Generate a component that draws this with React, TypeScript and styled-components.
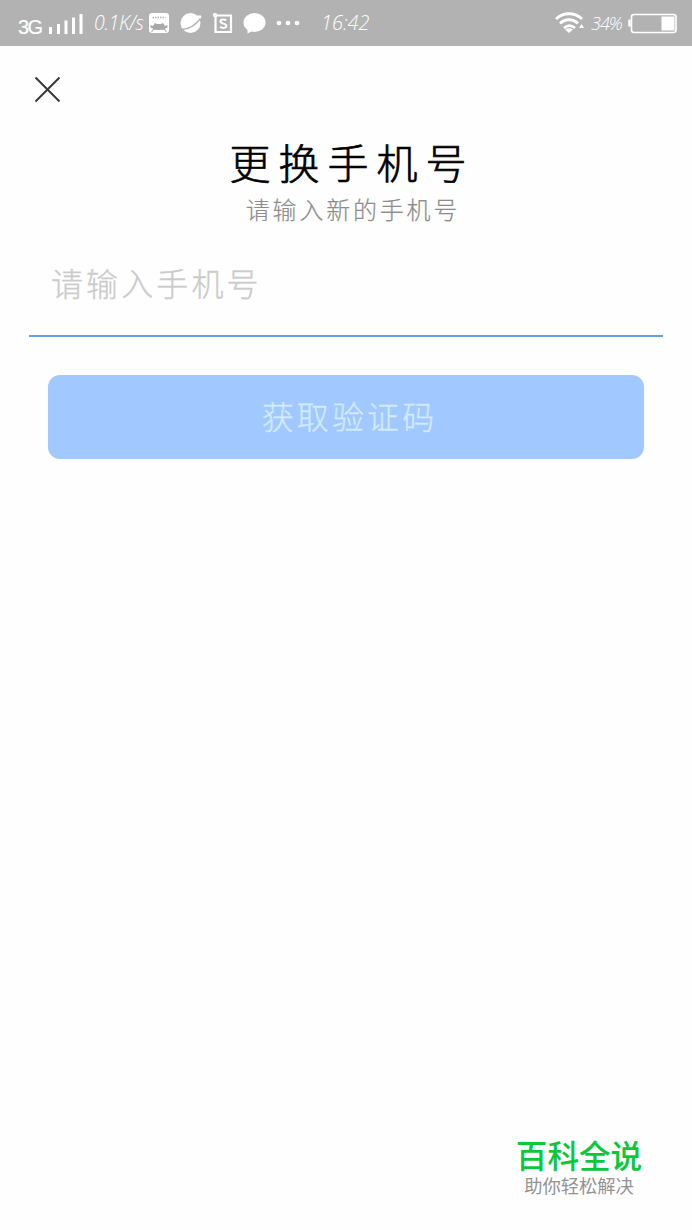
import React from "react";
import styled, { createGlobalStyle } from "styled-components";

const GlobalStyle = createGlobalStyle`
  * { box-sizing: border-box; }
  html, body { margin: 0; padding: 0; background: #fefefe; }
  body { font-family: "Noto Sans CJK SC", sans-serif; }
`;

const Screen = styled.div`
  display: flex;
  flex-direction: column;
  width: 692px;
  height: 1230px;
  overflow: hidden;
  background: #fefefe;
`;

const StatusBar = styled.header`
  display: flex;
  align-items: center;
  flex: none;
  height: 46px;
  padding: 0 14px 0 18px;
  background: #b2b2b2;
  color: #fff;
`;

const Network = styled.span`
  width: 30px;
  padding-top: 7px;
  font: 20px/24px "Liberation Sans", sans-serif;
  letter-spacing: -1.6px;
  -webkit-text-stroke: 0.2px #fff;
`;

const StatusText = styled.span<{ $width: number; $size: number; $gap?: number; $spacing?: number }>`
  flex: none;
  width: ${(p) => p.$width}px;
  margin-left: ${(p) => p.$gap ?? 0}px;
  font: italic 300 ${(p) => p.$size}px/24px "Open Sans", "Noto Sans", sans-serif;
  letter-spacing: ${(p) => p.$spacing ?? 0}px;
  white-space: nowrap;
`;

const Icon = styled.svg<{ $gap?: number }>`
  display: block;
  flex: none;
  margin-left: ${(p) => p.$gap ?? 0}px;
`;

const Spacer = styled.div`
  flex: 1;
`;

const CloseButton = styled.button`
  display: block;
  width: 28px;
  height: 28px;
  margin: 29px 0 0 34px;
  padding: 0;
  border: 0;
  background: none;
`;

const Heading = styled.div`
  display: flex;
  flex-direction: column;
  align-items: center;
  margin-top: 31px;
`;

const Title = styled.h1`
  margin: 0;
  padding-left: 12px;
  font-size: 41px;
  font-weight: 300;
  line-height: 54px;
  letter-spacing: 8px;
  color: #000;
  -webkit-text-stroke: 0.7px #000;
`;

const Subtitle = styled.p`
  margin: 2px 0 0;
  padding-left: 14px;
  font-size: 24px;
  font-weight: 300;
  line-height: 38px;
  letter-spacing: 2.8px;
  color: #8c8c8c;
  -webkit-text-stroke: 0.2px #8c8c8c;
`;

const Form = styled.form`
  display: flex;
  flex-direction: column;
  margin-top: 25px;
  padding: 0 29px;
`;

const PhoneInput = styled.input`
  width: 634px;
  height: 84px;
  padding: 0 22px 24px;
  border: 0;
  border-bottom: 2px solid #6b9fda;
  outline: 0;
  background: transparent;
  font: 300 32px/44px "Noto Sans CJK SC", sans-serif;
  letter-spacing: 3.1px;
  &::placeholder {
    color: #cbcbcb;
    opacity: 1;
    -webkit-text-stroke: 0.3px #cbcbcb;
  }
`;

const SubmitButton = styled.button`
  width: 596px;
  height: 84px;
  margin: 38px 0 0 19px;
  padding: 0 0 5px 7px;
  border: 0;
  border-radius: 12px;
  background: #a1c9ff;
  color: #d3eafe;
  font: 300 32px/44px "Noto Sans CJK SC", sans-serif;
  letter-spacing: 3.1px;
  -webkit-text-stroke: 0.3px #d3eafe;
`;

const Brand = styled.footer`
  display: flex;
  flex-direction: column;
  align-items: center;
  align-self: flex-end;
  width: 130px;
  margin: auto 48px 33px 0;
`;

const BrandName = styled.strong`
  font-size: 31.6px;
  font-weight: 500;
  line-height: 37px;
  color: #09c83c;
  white-space: nowrap;
`;

const BrandSlogan = styled.span`
  font-size: 18.3px;
  line-height: 24px;
  font-weight: 400;
  color: #929292;
  white-space: nowrap;
`;

export default function App() {
  return (
    <Screen>
      <GlobalStyle />
      <StatusBar>
        <Network>3G</Network>
        <Icon width="36" height="24" viewBox="0 0 36 24" fill="#fff">
          <rect x="1" y="16" width="3" height="7" />
          <rect x="9" y="13" width="3" height="10" />
          <rect x="16.500" y="9.500" width="3" height="13.500" />
          <rect x="24" y="6.500" width="3" height="16.500" />
          <rect x="31.500" y="3" width="3" height="20" />
        </Icon>
        <StatusText $width={54} $size={19.5} $gap={10} $spacing={-0.3}>0.1K/s</StatusText>
        <Icon width="22" height="22" viewBox="0 0 22 22">
          <rect x="1" y="1" width="20" height="20" rx="3" fill="#fff" />
          <path d="M4.500 5.500h13" stroke="#b2b2b2" strokeWidth="1.400" strokeDasharray="1.500 1" />
          <path d="M2.500 15.500V13L5 14l2-3 2 1h4l2-1 2 3 2.500-1v2.500l-3 1.500H5.500Z" fill="#a8a8a8" />
          <path d="m3.500 20 2-2.500h11l2 2.500" fill="none" stroke="#b2b2b2" strokeWidth="1.200" />
        </Icon>
        <Icon $gap={10} width="22" height="22" viewBox="0 0 22 22">
          <circle cx="10.500" cy="11" r="10" fill="#fff" />
          <path d="M17 3.500 21 3.500Q22 6 19.500 8" fill="#fff" />
          <path d="M2 17.500C9 17 16 12.500 20.500 6.500" fill="none" stroke="#b2b2b2" strokeWidth="1.300" />
        </Icon>
        <Icon $gap={10} width="22" height="22" viewBox="0 0 22 22">
          <path d="M3.500 3.500h15.500v16.500H3.500Z" fill="none" stroke="#fff" strokeWidth="2.200" />
          <circle cx="3" cy="3" r="2.200" fill="#fff" />
          <path d="M14.200 8.500C12.800 7 8.500 7 8.500 9.500c0 2.800 5.900 1.500 5.900 4.300 0 2.600-4.600 2.600-6.200 1" fill="none" stroke="#fff" strokeWidth="2" />
        </Icon>
        <Icon $gap={8} width="24" height="22" viewBox="0 0 24 22" fill="#fff">
          <ellipse cx="12.500" cy="10.500" rx="11" ry="9.500" />
          <path d="m5.500 15 0 6.500 6-3Z" />
        </Icon>
        <Icon $gap={8} width="28" height="8" viewBox="0 0 28 8" fill="#fff">
          <circle cx="5" cy="4" r="2.300" />
          <circle cx="14" cy="4" r="2.300" />
          <circle cx="23" cy="4" r="2.300" />
        </Icon>
        <StatusText $width={54} $size={20} $gap={19}>16:42</StatusText>
        <Spacer />
        <Icon width="31" height="24" viewBox="0 0 31 24" fill="none" stroke="#fff">
          <path d="M1 8C8 1 20 1 27 8M5 12.500c5-5 13-5 18 0M9 17c3.500-3 7.500-3 11 0" strokeWidth="2.800" />
          <path d="m10 18.500 4 3.500 4-3.500q-4-2.500-8 0Z" fill="#fff" stroke="none" />
          <path d="m24 17 2.500-4 2.500 4Z" fill="#fff" stroke="none" />
        </Icon>
        <StatusText $width={35} $size={18} $gap={5} $spacing={-1}>34%</StatusText>
        <Icon $gap={2} width="50" height="22" viewBox="0 0 50 22">
          <rect x="3.500" y="2.500" width="44.500" height="18" rx="2.500" fill="none" stroke="#fff" strokeWidth="1.600" />
          <rect x="33.500" y="4.500" width="13" height="14" fill="#fff" />
          <path d="M1.500 7.500v7" stroke="#fff" strokeWidth="2.500" />
        </Icon>
      </StatusBar>
      <CloseButton aria-label="关闭">
        <Icon width="28" height="28" viewBox="0 0 28 28">
          <path d="m1.500 2.500 24 24M25.500 2.500 1.500 26.500" fill="none" stroke="#383838" strokeWidth="2" />
        </Icon>
      </CloseButton>
      <Heading>
        <Title>更换手机号</Title>
        <Subtitle>请输入新的手机号</Subtitle>
      </Heading>
      <Form>
        <PhoneInput type="tel" placeholder="请输入手机号" />
        <SubmitButton type="button">获取验证码</SubmitButton>
      </Form>
      <Brand>
        <BrandName>百科全说</BrandName>
        <BrandSlogan>助你轻松解决</BrandSlogan>
      </Brand>
    </Screen>
  );
}
